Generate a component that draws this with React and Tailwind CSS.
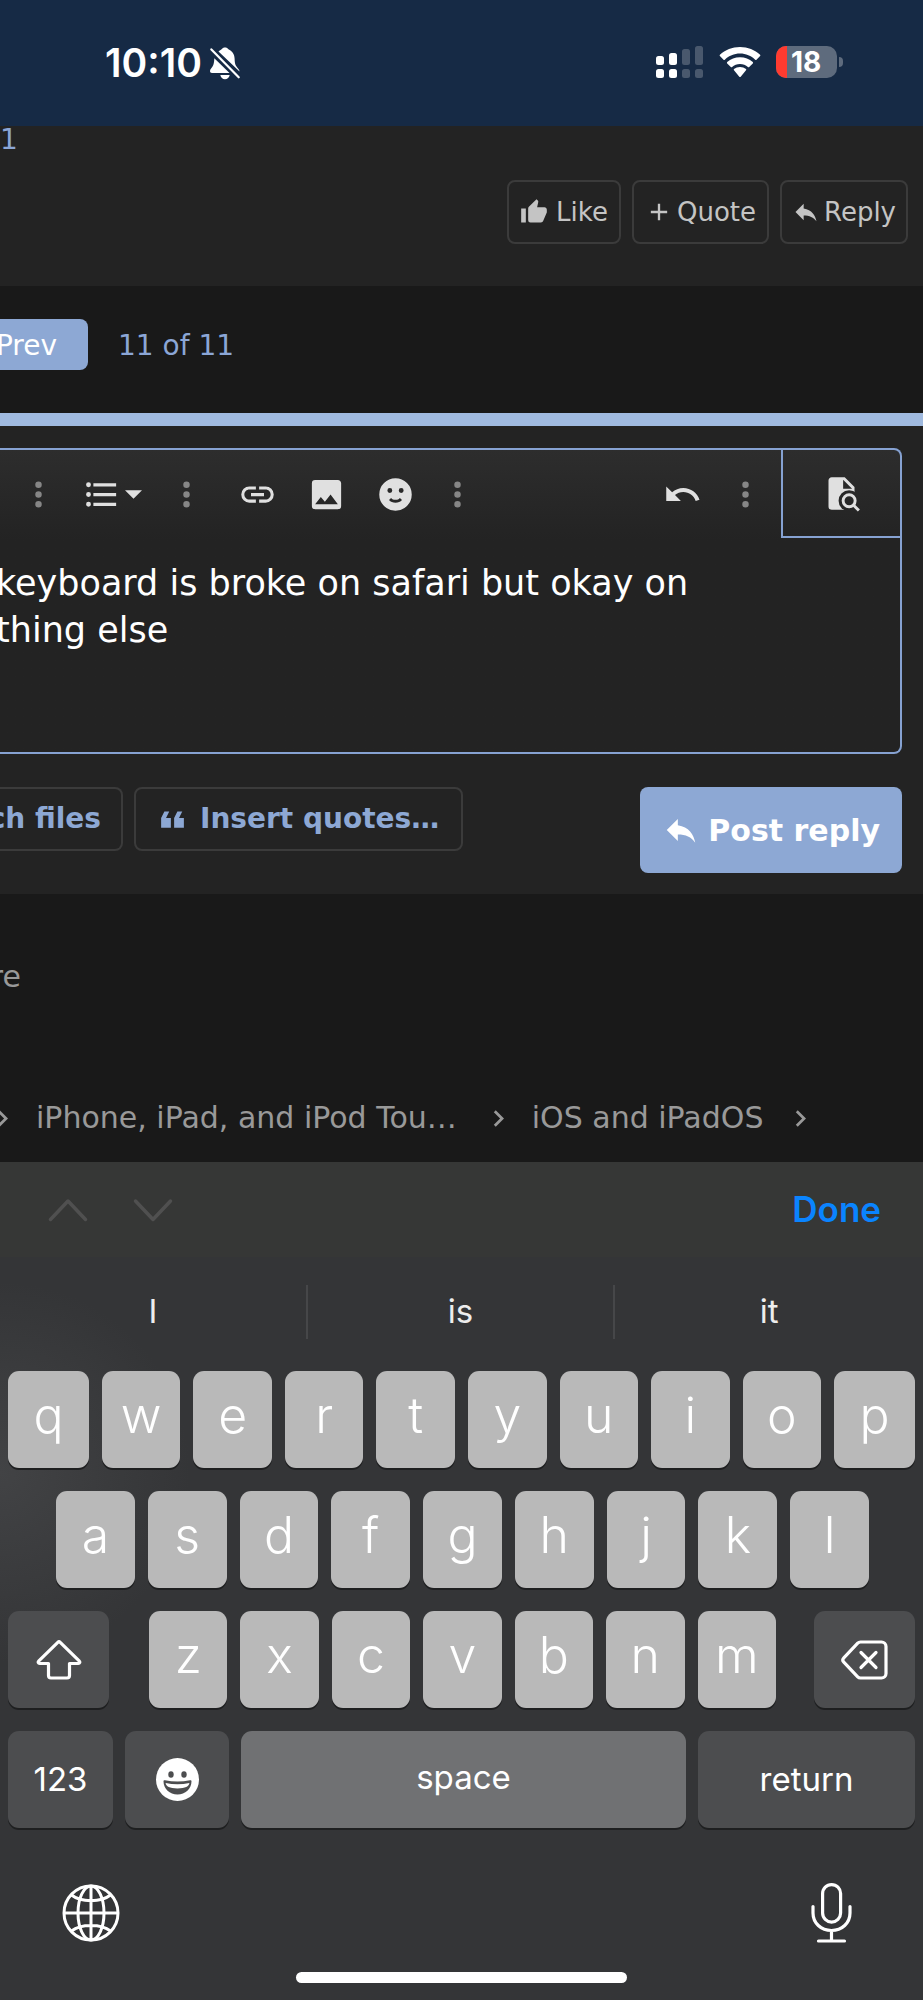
import { useState } from "react";

// filled icons on a 24 unit grid
const icons = {
  like: "M23,10C23,8.89 22.1,8 21,8H14.68L15.64,3.43C15.66,3.33 15.67,3.22 15.67,3.11C15.67,2.7 15.5,2.32 15.23,2.05L14.17,1L7.59,7.58C7.22,7.95 7,8.45 7,9V19A2,2 0 0,0 9,21H18C18.83,21 19.54,20.5 19.84,19.78L22.86,12.73C22.95,12.5 23,12.26 23,12V10M1,21H5V9H1V21Z",
  plus: "M19,13H13V19H11V13H5V11H11V5H13V11H19V13Z",
  reply: "M10,9V5L3,12L10,19V14.9C15,14.9 18.5,16.5 21,20C20,15 17,10 10,9Z",
  quote: "M10,7L8,11H11V17H5V11L7,7H10M18,7L16,11H19V17H13V11L15,7H18Z",
  dots: "M12,16A2,2 0 0,1 14,18A2,2 0 0,1 12,20A2,2 0 0,1 10,18A2,2 0 0,1 12,16M12,10A2,2 0 0,1 14,12A2,2 0 0,1 12,14A2,2 0 0,1 10,12A2,2 0 0,1 12,10M12,4A2,2 0 0,1 14,6A2,2 0 0,1 12,8A2,2 0 0,1 10,6A2,2 0 0,1 12,4Z",
  list: "M7,5H21V7H7V5M7,13V11H21V13H7M4,4.5A1.5,1.5 0 0,1 5.5,6A1.5,1.5 0 0,1 4,7.5A1.5,1.5 0 0,1 2.5,6A1.5,1.5 0 0,1 4,4.5M4,10.5A1.5,1.5 0 0,1 5.5,12A1.5,1.5 0 0,1 4,13.5A1.5,1.5 0 0,1 2.5,12A1.5,1.5 0 0,1 4,10.5M7,19V17H21V19H7M4,16.5A1.5,1.5 0 0,1 5.5,18A1.5,1.5 0 0,1 4,19.5A1.5,1.5 0 0,1 2.5,18A1.5,1.5 0 0,1 4,16.5Z",
  link: "M3.9,12C3.9,10.29 5.29,8.9 7,8.9H11V7H7A5,5 0 0,0 2,12A5,5 0 0,0 7,17H11V15.1H7C5.29,15.1 3.9,13.71 3.9,12M8,13H16V11H8V13M17,7H13V8.9H17C18.71,8.9 20.1,10.29 20.1,12C20.1,13.71 18.71,15.1 17,15.1H13V17H17A5,5 0 0,0 22,12A5,5 0 0,0 17,7Z",
  image: "M8.5,13.5L11,16.5L14.5,12L19,18H5M21,19V5C21,3.89 20.1,3 19,3H5A2,2 0 0,0 3,5V19A2,2 0 0,0 5,21H19A2,2 0 0,0 21,19Z",
  smile: "M12,2A10,10 0 1,0 22,12A10,10 0 0,0 12,2M8.5,8A1.5,1.5 0 1,1 7,9.5A1.5,1.5 0 0,1 8.5,8M15.5,8A1.5,1.5 0 1,1 14,9.5A1.5,1.5 0 0,1 15.5,8M12,17.1C10.4,17.1 8.9,16.5 8,15.4L9.3,14.1C9.8,14.8 10.8,15.3 12,15.3C13.2,15.3 14.2,14.8 14.7,14.1L16,15.4C15.1,16.5 13.6,17.1 12,17.1Z",
  undo: "M12.5,8C9.85,8 7.45,9 5.6,10.6L2,7V16H11L7.38,12.38C8.77,11.22 10.54,10.5 12.5,10.5C16.04,10.5 19.05,12.81 20.1,16L22.47,15.22C21.08,11.03 17.15,8 12.5,8Z",
};

const Icon = ({ name, className }) => (
  <svg viewBox="0 0 24 24" fill="currentColor" fillRule="evenodd" className={className} aria-hidden="true">
    <path d={icons[name]} />
  </svg>
);

const Crumb = () => (
  <svg viewBox="8 6 8 12" fill="currentColor" className="h-[17px] w-[11px] shrink-0" aria-hidden="true">
    <path d="M8.59,16.58L13.17,12L8.59,7.41L10,6L16,12L10,18L8.59,16.58Z" />
  </svg>
);

const Dots = () => <Icon name="dots" className="size-[39px] shrink-0 text-[#868686]" />;

function StatusBar() {
  return (
    <header className="flex h-[126px] items-start justify-between bg-[#162a45] pt-[38px] pr-20 pl-[105px] font-['Inter',sans-serif] text-white">
      <div className="flex h-[50px] items-center gap-2">
        <span className="text-[39px] leading-[50px] font-semibold">10:10</span>
        <svg viewBox="0 0 30 33" fill="currentColor" className="h-[33px] w-[30px]" aria-label="Silent">
          <path d="M8.5 4.6C9.7 3.4 10.8 2.9 11.6 2.3C12.5.9 13.5.4 15 .4s2.600.5 3.400 1.900c3.600 1.600 6 4.700 6.200 9.200.2 5 .7 6.700 2.600 8.900l1.400 1.900c.5.700.9 1.300.9 2.100z" />
          <path d="M4.300 11.200L19.500 26H2C.7 26 0 25.100 0 24c0-2 2.300-3.600 3.300-6C4 16.200 4.200 13.800 4.300 11.200z" />
          <path d="M1.500 2.600L28.900 30.200" stroke="#162a45" strokeWidth="5" />
          <path d="M1.400 2.400L28.700 30.300" stroke="currentColor" strokeWidth="2.200" strokeLinecap="round" />
          <path d="M10.300 28h9.400c-.5 2.400-2.300 4.200-4.700 4.200s-4.200-1.800-4.700-4.200z" />
        </svg>
      </div>
      <div className="flex h-12 items-center">
        <svg viewBox="0 0 47 32" fill="currentColor" className="h-8 w-[47px]" aria-label="Signal">
          <rect y="10" width="8" height="9" rx="2.500" />
          <rect x="13" y="7" width="8" height="12" rx="2.500" />
          <rect x="26" y="3" width="8" height="16" rx="2.500" opacity=".22" />
          <rect x="39" y="0" width="8" height="19" rx="2.500" opacity=".22" />
          <rect y="23" width="8" height="9" rx="2.500" />
          <rect x="13" y="23" width="8" height="9" rx="2.500" />
          <rect x="26" y="23" width="8" height="9" rx="2.500" opacity=".22" />
          <rect x="39" y="23" width="8" height="9" rx="2.500" opacity=".22" />
        </svg>
        <svg viewBox="0 0 42 31" fill="currentColor" className="ml-4 h-[31px] w-[42px]" aria-label="Wi-Fi">
          <path d="M21 6.600c5.900 0 11.200 2.300 15.200 6.100.4.400.9.400 1.300 0l3.600-3.600c.4-.4.400-1 0-1.400C35.900 2.900 28.800 0 21 0S6.100 2.900.9 7.700c-.4.400-.4 1 0 1.400l3.600 3.600c.4.400.9.400 1.300 0C9.800 8.900 15.100 6.600 21 6.600z" />
          <path d="M21 17c3 0 5.800 1.100 7.900 3 .4.400 1 .4 1.300 0l3.600-3.600c.4-.4.400-1 0-1.400C30.400 12 25.900 10.200 21 10.200S11.600 12 8.200 15c-.4.400-.4 1 0 1.400l3.600 3.600c.4.400.9.400 1.300 0 2.100-1.900 4.900-3 7.900-3z" />
          <path d="M27 23.200c.4-.4.400-.9 0-1.300-1.700-1.300-3.700-2-6-2s-4.300.7-6 2c-.4.400-.4.900 0 1.300l5.300 6.500c.4.400 1 .4 1.400 0z" />
        </svg>
        <div className="ml-[15px] flex h-8 w-[61px] overflow-hidden rounded-[10px] bg-[#5e6b7d]">
          <div className="w-[11px] shrink-0 bg-[#ff3b30]"></div>
          <span className="ml-1 text-[28px] leading-8 font-bold">18</span>
        </div>
        <div className="ml-0.5 h-[10px] w-1 rounded-r-full bg-[#5e6b7d]"></div>
      </div>
    </header>
  );
}

function Editor() {
  const [text, setText] = useState("keyboard is broke on safari but okay on\nthing else");

  return (
    <div className="mr-[21px] overflow-hidden rounded-r-lg border-2 border-l-0 border-[#86a2d2] bg-gradient-to-b from-[#2d2d2d] to-[#232323] to-[90px]">
      <div className="flex h-[88px] items-center pl-[19px] text-[#e0e0e0]">
        <Dots />
        <button type="button" aria-label="List" className="ml-6 flex items-center gap-1">
          <Icon name="list" className="size-[39px]" />
          <svg viewBox="7 10 10 5" fill="currentColor" className="h-[9px] w-[17px]" aria-hidden="true">
            <path d="M7,10L12,15L17,10H7Z" />
          </svg>
        </button>
        <div className="ml-[25px]">
          <Dots />
        </div>
        <div className="mr-[23px] ml-8 flex gap-[30px]">
          <button type="button" aria-label="Insert link">
            <Icon name="link" className="size-[39px]" />
          </button>
          <button type="button" aria-label="Insert image">
            <Icon name="image" className="size-[39px]" />
          </button>
          <button type="button" aria-label="Smilies">
            <Icon name="smile" className="size-[39px]" />
          </button>
        </div>
        <Dots />
        <button type="button" aria-label="Undo" className="mr-6 ml-auto">
          <Icon name="undo" className="size-[39px]" />
        </button>
        <Dots />
        <button
          type="button"
          aria-label="Preview"
          className="ml-4 flex h-full w-[119px] items-center justify-center border-b-2 border-l-2 border-[#86a2d2]"
        >
          <svg viewBox="0 0 24 24" className="size-[39px] overflow-visible" aria-hidden="true">
            <mask id="lens">
              <path fill="#fff" d="M0 0H24V24H0z" />
              <circle cx="16.700" cy="16.500" r="6.500" />
              <path stroke="#000" strokeWidth="5" d="M17 17L24 24" />
            </mask>
            <path
              mask="url(#lens)"
              fill="currentColor"
              fillRule="evenodd"
              d="M6 2C4.900 2 4 2.900 4 4v16a2 2 0 0 0 2 2h14V8l-6-6H6zM13 3.500L18.500 9H13z"
            />
            <g fill="none" stroke="currentColor" strokeWidth="1.800">
              <circle cx="16.700" cy="16.500" r="3.700" />
              <path d="M19.300 19.100L22.700 22.500" />
            </g>
          </svg>
        </button>
      </div>
      <textarea
        aria-label="Reply"
        spellCheck={false}
        value={text}
        onChange={(e) => setText(e.target.value)}
        className="-ml-1 block h-[214px] w-full resize-none pt-[22px] text-[35px] leading-[47px] text-white outline-none"
      />
    </div>
  );
}

const Key = ({ children, className }) => (
  <button
    type="button"
    className={`flex h-[97px] items-center justify-center rounded-[11px] text-white shadow-[0_2px_0_#1e1f20] ${className}`}
  >
    {children}
  </button>
);

const letter = "flex-1 bg-[#b9b9b9] pb-2 text-[50px] font-light";
const letterEdge = "flex-[1.03] bg-[#b9b9b9] pb-2 text-[50px] font-light";
const dark = "bg-[#4c4d4f]";

function Keyboard() {
  return (
    <section className="bg-[#343537] bg-[radial-gradient(circle_at_0px_310px,#424345,transparent_190px)] font-['Inter',sans-serif]">
      <div className="flex h-[95px] items-center bg-[#363736] pr-[42px] pl-12">
        <button type="button" aria-label="Previous field">
          <svg viewBox="0 0 40 24" fill="none" stroke="#505050" strokeWidth="3.500" strokeLinecap="round" strokeLinejoin="round" className="h-6 w-10">
            <path d="M2.500 21.500L20 3L37.500 21.500" />
          </svg>
        </button>
        <button type="button" aria-label="Next field" className="ml-[45px]">
          <svg viewBox="0 0 40 24" fill="none" stroke="#505050" strokeWidth="3.500" strokeLinecap="round" strokeLinejoin="round" className="h-6 w-10">
            <path d="M2.500 3L20 21.500L37.500 3" />
          </svg>
        </button>
        <button type="button" className="ml-auto text-[35px] font-semibold text-[#0a84ff]">
          Done
        </button>
      </div>

      <div className="grid h-[114px] grid-cols-3 items-center divide-x-2 divide-[#464749] pb-1 text-[33px] text-[#ededed]">
        {["I", "is", "it"].map((word) => (
          <button key={word} type="button" className="h-[54px]">
            {word}
          </button>
        ))}
      </div>

      <div className="flex flex-col gap-[23px] px-2">
        <div className="flex gap-[13px]">
          {"qwertyuiop".split("").map((k) => (
            <Key key={k} className={k === "q" || k === "p" ? letterEdge : letter}>
              {k}
            </Key>
          ))}
        </div>
        <div className="flex gap-[13px] pr-[46px] pl-12">
          {"asdfghjkl".split("").map((k) => (
            <Key key={k} className={letter}>
              {k}
            </Key>
          ))}
        </div>
        <div className="flex">
          <Key className={`w-[101px] ${dark}`}>
            <svg viewBox="0 0 46 40" fill="none" stroke="currentColor" strokeWidth="3.200" strokeLinejoin="round" className="h-10 w-[46px]" aria-label="Shift">
              <path d="M21.800 2.400a1.700 1.700 0 0 1 2.400 0L43.400 21.200c.8.900.3 2.300-1 2.300H33.500V35.500a2.500 2.500 0 0 1-2.500 2.500H15a2.500 2.500 0 0 1-2.500-2.500V23.500H3.600c-1.300 0-1.800-1.400-1-2.300z" />
            </svg>
          </Key>
          <div className="mr-[38px] ml-10 flex flex-1 gap-[13px]">
            {"zxcvbnm".split("").map((k) => (
              <Key key={k} className={letter}>
                {k}
              </Key>
            ))}
          </div>
          <Key className={`w-[101px] ${dark}`}>
            <svg viewBox="0 0 47 40" fill="none" stroke="currentColor" strokeWidth="3.200" strokeLinecap="round" strokeLinejoin="round" className="h-10 w-[47px]" aria-label="Delete">
              <path d="M19.500 2H40.500a4.500 4.500 0 0 1 4.500 4.500V33.500a4.500 4.500 0 0 1-4.500 4.500H19.500a4 4 0 0 1-2.800-1.200L2.800 22.200a3.200 3.200 0 0 1 0-4.400L16.700 3.200A4 4 0 0 1 19.500 2z" />
              <path d="M20 12.500L35 27.500M35 12.500L20 27.500" />
            </svg>
          </Key>
        </div>
        <div className="flex gap-3">
          <Key className={`w-[105px] text-[33px] ${dark}`}>123</Key>
          <Key className={`w-[104px] ${dark}`}>
            <svg viewBox="0 0 43 43" className="size-[43px]" aria-label="Emoji">
              <circle cx="21.500" cy="21.500" r="21.500" fill="#fff" />
              <g fill="#4c4d4f">
                <ellipse cx="15" cy="16.500" rx="2.700" ry="3.200" />
                <ellipse cx="28" cy="16.500" rx="2.700" ry="3.200" />
                <path d="M7.500 23.200c0-.8.700-1.100 1.500-.9 8 1.700 17 1.700 25 0 .8-.2 1.500.1 1.500.9 0 7.300-6.200 13.300-14 13.300s-14-6-14-13.300z" />
              </g>
              <path fill="#fff" d="M9.600 25c7.800 1.600 16 1.600 23.800 0-.4 3.400-4 5.400-11.900 5.400S10 28.400 9.600 25z" />
            </svg>
          </Key>
          <Key className="flex-1 bg-[#707173] pb-1 text-[33px]">space</Key>
          <Key className={`w-[217px] text-[33px] ${dark}`}>return</Key>
        </div>
      </div>

      <div className="flex items-center justify-between pt-[54px] pr-[71px] pl-[62px] text-white">
        <button type="button" aria-label="Next keyboard">
          <svg viewBox="0 0 58 58" fill="none" stroke="currentColor" strokeWidth="3" className="size-[58px]">
            <circle cx="29" cy="29" r="27" />
            <ellipse cx="29" cy="29" rx="13" ry="27" />
            <path d="M29 2V56M2 29H56M9.500 11C19 18.500 39 18.500 48.500 11M9.500 47C19 39.500 39 39.500 48.500 47" />
          </svg>
        </button>
        <button type="button" aria-label="Dictate">
          <svg viewBox="0 0 41 62" fill="none" stroke="currentColor" strokeWidth="3.200" strokeLinecap="round" className="h-[62px] w-[41px]">
            <rect x="11.600" y="2.600" width="18" height="37.500" rx="9" />
            <path d="M2 24.500V31C2 41 10 48.500 20.500 48.500S39 41 39 31V24.500M20.500 48.500V59M7.500 59H33.500" />
          </svg>
        </button>
      </div>
      <div className="flex justify-center pt-[28px] pb-[17px]">
        <div className="h-[11px] w-[331px] rounded-full bg-white"></div>
      </div>
    </section>
  );
}

export default function App() {
  const postButton = "flex h-16 items-center rounded-lg border-2 border-[#3b3b3b]";

  return (
    <div className="overflow-hidden bg-[#191919] font-['DejaVu_Sans',sans-serif]">
      <StatusBar />

      <main>
        <article className="h-40 bg-[#232323]">
          <a href="#post" className="block h-[54px] text-[28px] leading-7 text-[#8ba6d6]">
            1
          </a>
          <div className="flex justify-end gap-[11px] pr-[15px] text-[26px] text-[#c4c4c4]">
            <button type="button" className={`gap-2 px-[11px] ${postButton}`}>
              <Icon name="like" className="size-7" />
              Like
            </button>
            <button type="button" className={`gap-1 px-[11px] ${postButton}`}>
              <Icon name="plus" className="size-7" />
              Quote
            </button>
            <button type="button" className={`gap-1 px-[10px] ${postButton}`}>
              <Icon name="reply" className="size-7" />
              Reply
            </button>
          </div>
        </article>

        <nav className="flex h-[127px] items-start gap-[30px] pt-[33px] text-[28px] leading-[49px]">
          <a href="#prev" className="flex w-[88px] justify-end overflow-hidden rounded-r-lg bg-[#8da8d4] pt-0.5 pr-[31px] text-white">
            Prev
          </a>
          <a href="#pages" className="pt-0.5 text-[#8ba6d6]">
            11 of 11
          </a>
        </nav>

        <div className="h-[13px] bg-[#a0badf]"></div>

        <form className="bg-[#232323] pt-[22px] pb-[21px]" onSubmit={(e) => e.preventDefault()}>
          <Editor />
          <div className="mt-[33px] flex items-start gap-[11px] pr-[21px] text-[28px] font-bold text-[#8da8d4]">
            <button
              type="button"
              className="flex h-16 w-[123px] items-center justify-end overflow-hidden rounded-r-lg border-2 border-l-0 border-[#3b3b3b] pr-5 whitespace-nowrap"
            >
              ch files
            </button>
            <button type="button" className={`gap-2 pr-[22px] pl-[17px] ${postButton}`}>
              <Icon name="quote" className="size-[39px]" />
              Insert quotes…
            </button>
            <button type="submit" className="ml-auto flex h-[86px] items-center gap-2 rounded-lg bg-[#8da8d4] px-[22px] text-[30px] text-white">
              <Icon name="reply" className="size-[38px]" />
              Post reply
            </button>
          </div>
        </form>

        <footer className="h-[268px] pt-[63px] text-[30px] leading-10 text-[#999999]">
          <div className="flex w-[21px] justify-end">re</div>
          <nav className="-ml-[3px] flex items-center gap-7 pt-[101px] whitespace-nowrap">
            <Crumb />
            <a href="#iphone" className="pr-2">
              iPhone, iPad, and iPod Tou…
            </a>
            <Crumb />
            <a href="#ios" className="pr-1">
              iOS and iPadOS
            </a>
            <Crumb />
          </nav>
        </footer>
      </main>

      <Keyboard />
    </div>
  );
}
